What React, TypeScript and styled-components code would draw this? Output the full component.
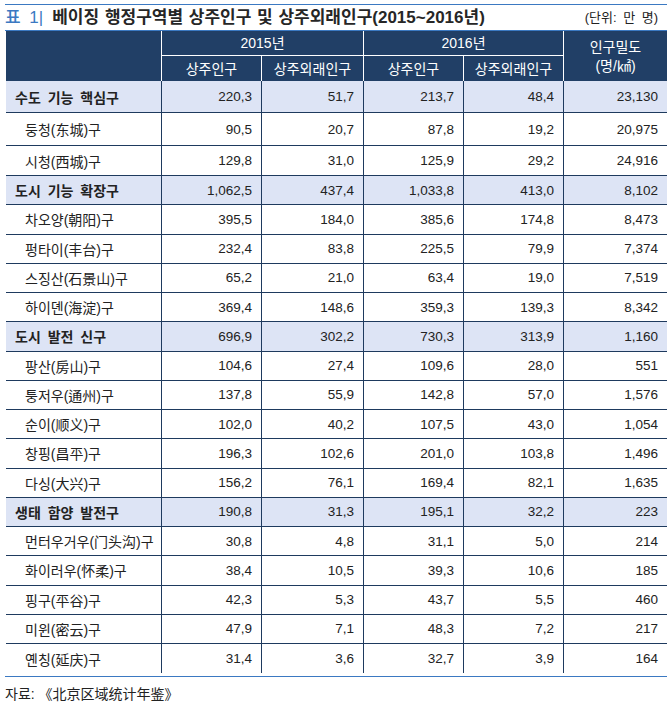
import React from "react";
import styled, { createGlobalStyle } from "styled-components";

const GlobalStyle = createGlobalStyle`
  html, body { margin: 0; padding: 0; background: #ffffff; }
  * { box-sizing: border-box; }
  body {
    font-family: "Liberation Sans", "Noto Sans CJK KR", "Noto Sans CJK SC", sans-serif;
    color: #222222;
  }
`;

const NAVY = "#213f66";
const LINE = "#1e3a5e";
const BLUE = "#3b79c2";
const SECTION_BG = "#dde4f5";
const COLS = "155px 100px 102px 100px 100px 104px";

const Page = styled.div`
  width: 672px;
  padding: 4px 5px 0 5px;
`;

const Rule = styled.div<{ $gap?: number }>`
  width: 662px;
  height: 1px;
  background: ${BLUE};
  margin-top: ${(p) => p.$gap ?? 0}px;
`;

const TitleBar = styled.div`
  height: 25px;
  display: flex;
  align-items: center;
  justify-content: space-between;
  padding-right: 9px;
`;

const Title = styled.h1`
  margin: 0;
  font-size: 17px;
  font-weight: 700;
  line-height: 1;
  color: #262626;
  word-spacing: 1px;
  display: flex;
  align-items: center;
`;

const TitleTag = styled.span`
  color: ${BLUE};
  margin-right: 9px;
  word-spacing: 4px;
  font-weight: 500;
`;

const Unit = styled.span`
  font-size: 13px;
  line-height: 1;
  color: #222;
  word-spacing: 3px;
`;

const Table = styled.div`
  width: 661px;
  margin-left: 1px;
`;

const Header = styled.div`
  display: grid;
  grid-template-columns: ${COLS};
  grid-template-rows: 25px 25px;
  background: ${NAVY};
  color: #ffffff;
  font-size: 14px;
`;

const HeadCell = styled.div<{
  $col: string;
  $row: string;
  $left?: boolean;
  $bottom?: boolean;
}>`
  grid-column: ${(p) => p.$col};
  grid-row: ${(p) => p.$row};
  display: flex;
  flex-direction: column;
  align-items: center;
  justify-content: center;
  border-left: ${(p) => (p.$left ? "1px solid #ffffff" : "none")};
  border-bottom: ${(p) => (p.$bottom ? "1px solid #ffffff" : "none")};
  line-height: 19px;
  padding-top: 1px;
`;

const Row = styled.div<{ $h: number; $section?: boolean; $last?: boolean }>`
  display: grid;
  grid-template-columns: ${COLS};
  height: ${(p) => p.$h}px;
  background: ${(p) => (p.$section ? SECTION_BG : "#ffffff")};
  border-bottom: ${(p) => (p.$last ? "none" : `1px solid ${LINE}`)};
`;

const Label = styled.div<{ $section?: boolean }>`
  display: flex;
  align-items: center;
  padding-left: ${(p) => (p.$section ? 9 : 19)}px;
  font-size: 14px;
  font-weight: ${(p) => (p.$section ? 700 : 400)};
  color: #222;
  word-spacing: ${(p) => (p.$section ? 3 : 0)}px;
  white-space: nowrap;
`;

const Num = styled.div`
  display: flex;
  align-items: center;
  justify-content: flex-end;
  padding-right: 9px;
  border-left: 1px solid ${LINE};
  font-size: 13.5px;
  color: #222;
`;

const Source = styled.div`
  margin-top: 9px;
  font-size: 14px;
  line-height: 16px;
  color: #222;
`;

type R = { name: string; section?: boolean; v: string[] };

const rows: R[] = [
  { name: "수도 기능 핵심구", section: true, v: ["220,3", "51,7", "213,7", "48,4", "23,130"] },
  { name: "둥청(东城)구", v: ["90,5", "20,7", "87,8", "19,2", "20,975"] },
  { name: "시청(西城)구", v: ["129,8", "31,0", "125,9", "29,2", "24,916"] },
  { name: "도시 기능 확장구", section: true, v: ["1,062,5", "437,4", "1,033,8", "413,0", "8,102"] },
  { name: "차오양(朝阳)구", v: ["395,5", "184,0", "385,6", "174,8", "8,473"] },
  { name: "펑타이(丰台)구", v: ["232,4", "83,8", "225,5", "79,9", "7,374"] },
  { name: "스징산(石景山)구", v: ["65,2", "21,0", "63,4", "19,0", "7,519"] },
  { name: "하이뎬(海淀)구", v: ["369,4", "148,6", "359,3", "139,3", "8,342"] },
  { name: "도시 발전 신구", section: true, v: ["696,9", "302,2", "730,3", "313,9", "1,160"] },
  { name: "팡산(房山)구", v: ["104,6", "27,4", "109,6", "28,0", "551"] },
  { name: "퉁저우(通州)구", v: ["137,8", "55,9", "142,8", "57,0", "1,576"] },
  { name: "순이(顺义)구", v: ["102,0", "40,2", "107,5", "43,0", "1,054"] },
  { name: "창핑(昌平)구", v: ["196,3", "102,6", "201,0", "103,8", "1,496"] },
  { name: "다싱(大兴)구", v: ["156,2", "76,1", "169,4", "82,1", "1,635"] },
  { name: "생태 함양 발전구", section: true, v: ["190,8", "31,3", "195,1", "32,2", "223"] },
  { name: "먼터우거우(门头沟)구", v: ["30,8", "4,8", "31,1", "5,0", "214"] },
  { name: "화이러우(怀柔)구", v: ["38,4", "10,5", "39,3", "10,6", "185"] },
  { name: "핑구(平谷)구", v: ["42,3", "5,3", "43,7", "5,5", "460"] },
  { name: "미윈(密云)구", v: ["47,9", "7,1", "48,3", "7,2", "217"] },
  { name: "옌칭(延庆)구", v: ["31,4", "3,6", "32,7", "3,9", "164"] },
];

const heights = [32, 33, 30];

export default function App() {
  return (
    <>
      <GlobalStyle />
      <Page>
        <Rule />
        <TitleBar>
          <Title>
            <TitleTag>표 1|</TitleTag>
            베이징 행정구역별 상주인구 및 상주외래인구(2015~2016년)
          </Title>
          <Unit>(단위: 만 명)</Unit>
        </TitleBar>
        <Rule />
        <Table>
          <Header>
            <HeadCell $col="1" $row="1 / span 2" />
            <HeadCell $col="2 / span 2" $row="1" $left $bottom>
              2015년
            </HeadCell>
            <HeadCell $col="4 / span 2" $row="1" $left $bottom>
              2016년
            </HeadCell>
            <HeadCell $col="6" $row="1 / span 2" $left>
              <span>인구밀도</span>
              <span>(명/㎢)</span>
            </HeadCell>
            <HeadCell $col="2" $row="2" $left>
              상주인구
            </HeadCell>
            <HeadCell $col="3" $row="2" $left>
              상주외래인구
            </HeadCell>
            <HeadCell $col="4" $row="2" $left>
              상주인구
            </HeadCell>
            <HeadCell $col="5" $row="2" $left>
              상주외래인구
            </HeadCell>
          </Header>
          {rows.map((r, i) => (
            <Row
              key={r.name}
              $h={heights[i] ?? 29.25}
              $section={r.section}
              $last={i === rows.length - 1}
            >
              <Label $section={r.section}>{r.name}</Label>
              {r.v.map((v, j) => (
                <Num key={j}>{v}</Num>
              ))}
            </Row>
          ))}
        </Table>
        <Rule $gap={3} />
        <Source>자료: 《北京区域统计年鉴》</Source>
      </Page>
    </>
  );
}
